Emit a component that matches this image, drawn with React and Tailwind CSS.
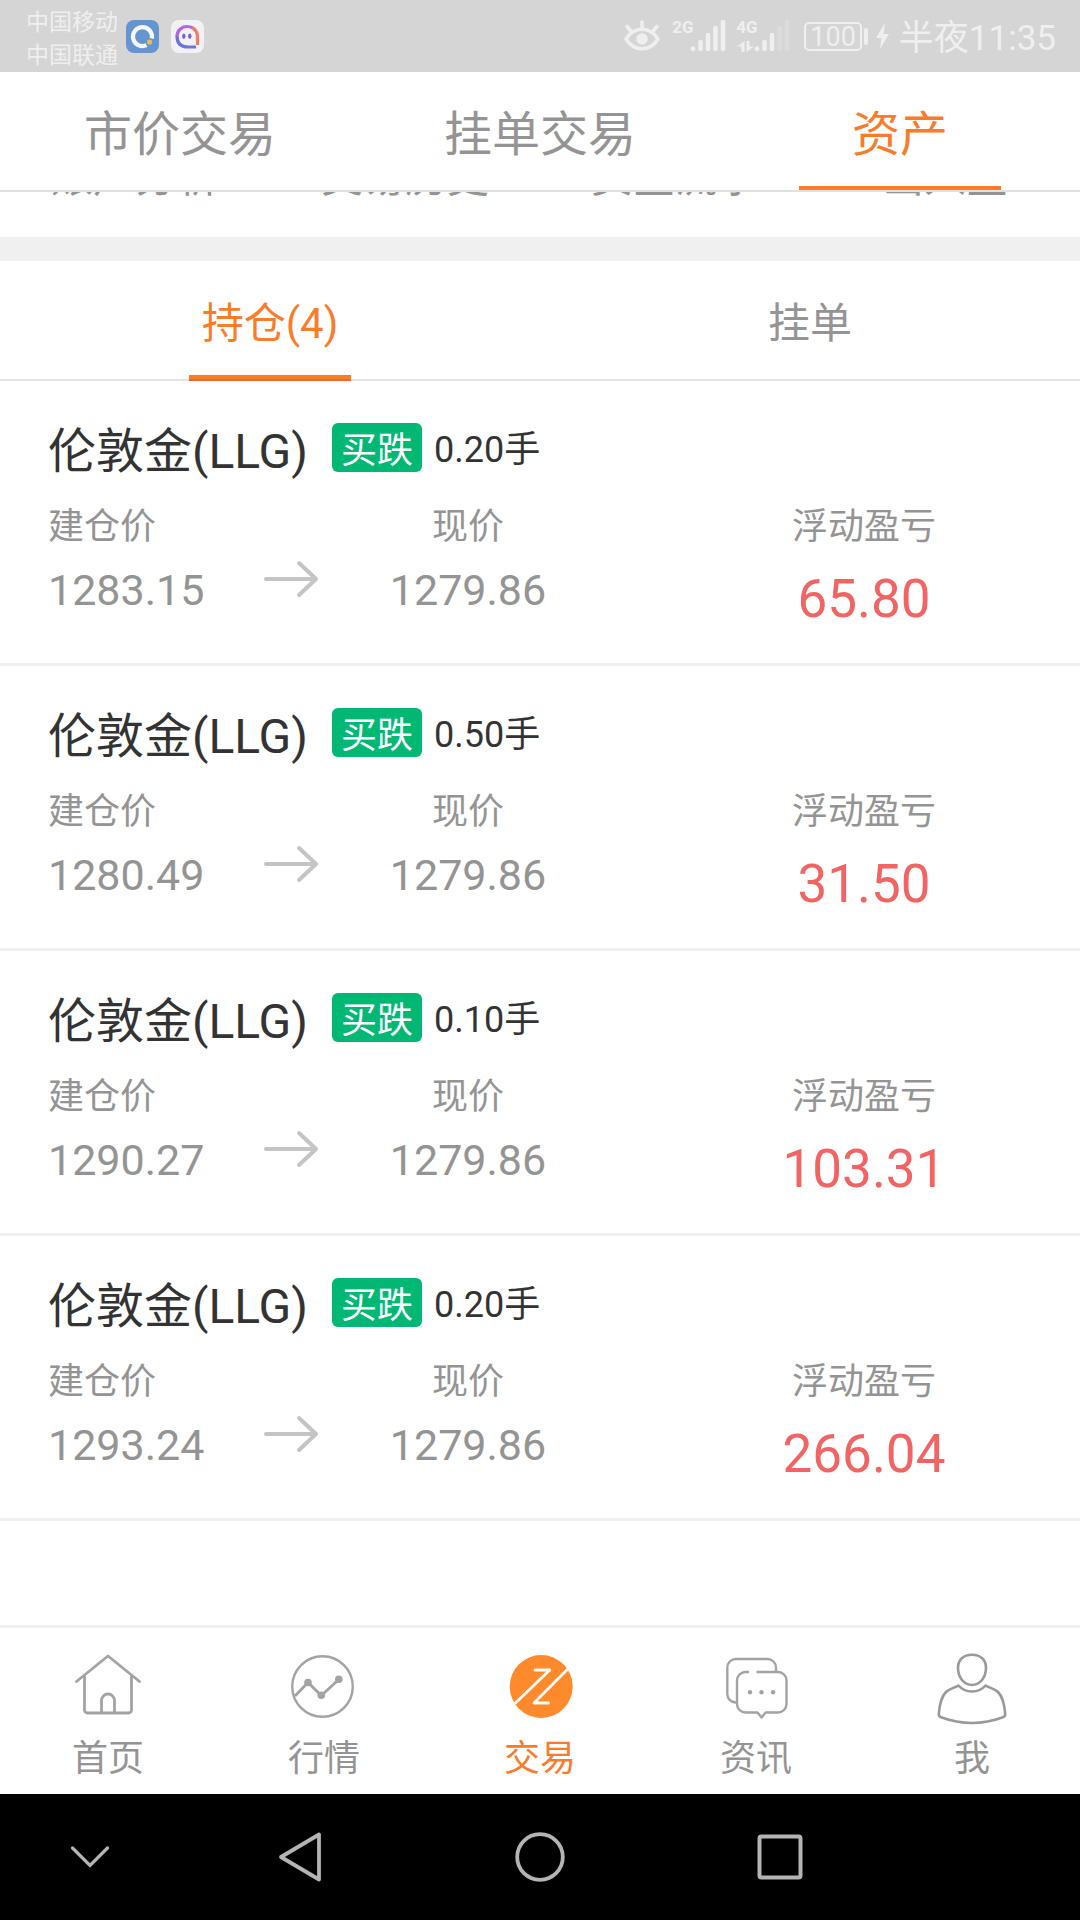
import React, { useState } from 'react';

const positions = [
    { id: 1, name: '伦敦金(LLG)', side: '买跌', lots: '0.20手', open: '1283.15', current: '1279.86', profit: '65.80' },
    { id: 2, name: '伦敦金(LLG)', side: '买跌', lots: '0.50手', open: '1280.49', current: '1279.86', profit: '31.50' },
    { id: 3, name: '伦敦金(LLG)', side: '买跌', lots: '0.10手', open: '1290.27', current: '1279.86', profit: '103.31' },
    { id: 4, name: '伦敦金(LLG)', side: '买跌', lots: '0.20手', open: '1293.24', current: '1279.86', profit: '266.04' },
];

const HomeIcon = () => (
    <svg className="w-[72px] h-[76px]" viewBox="0 0 72 76" fill="none" stroke="#a3a3a3" strokeWidth="2.8" strokeLinecap="round" strokeLinejoin="round">
        <path d="M4.5 32.5L36 7l31.500 25.500" />
        <path d="M12.500 28v33a3 3 0 0 0 3 3h41a3 3 0 0 0 3-3V28" />
        <path d="M29.500 63V51.500a6.500 6.500 0 0 1 13 0V63" />
    </svg>
);

const MarketIcon = () => (
    <svg className="w-[72px] h-[76px]" viewBox="0 0 72 76" fill="none" stroke="#a3a3a3" strokeWidth="2.4">
        <circle cx="34.500" cy="37.500" r="30.300" />
        <path d="M7 47l13-13.500 13.300 13L50.800 30.500" strokeWidth="2.8" />
        <g fill="#a3a3a3" stroke="none">
            <circle cx="20" cy="33.500" r="3.800" />
            <circle cx="33.300" cy="46.300" r="3.800" />
            <circle cx="50.800" cy="30.300" r="3.800" />
        </g>
    </svg>
);

const TradeIcon = () => (
    <svg className="w-[72px] h-[76px]" viewBox="0 0 72 76" fill="none">
        <circle cx="37.200" cy="37.500" r="31.500" fill="#ff8a2b" />
        <g stroke="#fff" strokeWidth="2.8" strokeLinecap="round" strokeLinejoin="round">
            <path d="M31 21h14.800L11.500 54" />
            <path d="M63.800 20L30 54h14.600" />
        </g>
    </svg>
);

const NewsIcon = () => (
    <svg className="w-[72px] h-[76px]" viewBox="0 0 72 76" fill="none" stroke="#a3a3a3" strokeWidth="2.4" strokeLinejoin="round">
        <path d="M17 53.500h-1.500A8.500 8.500 0 0 1 7.300 45V18.500A8.500 8.500 0 0 1 15.800 10H47.500a8.500 8.500 0 0 1 8.500 8.500V23" />
        <path d="M29 23h-3.500a8.500 8.500 0 0 0-8.500 8.500V55a8.500 8.500 0 0 0 8.500 8.500h12l4.100 5 4.100-5h12.300a8.500 8.500 0 0 0 8.500-8.500V31.500a8.500 8.500 0 0 0-8.500-8.500H36.500" />
        <g fill="#a3a3a3" stroke="none">
            <circle cx="30" cy="43.300" r="2.200" />
            <circle cx="41.500" cy="43.300" r="2.200" />
            <circle cx="53" cy="43.300" r="2.200" />
        </g>
    </svg>
);

const MeIcon = () => (
    <svg className="w-[72px] h-[76px]" viewBox="0 0 72 76" fill="none" stroke="#999" strokeWidth="2.6" strokeLinejoin="round">
        <path d="M36 5.800c8.500 0 14 5 14 13 0 9-5.500 17.200-14 17.200s-14-8.200-14-17.200c0-8 5.500-13 14-13z" />
        <path d="M22.400 36.500c-4 2.500-9 3-12.400 6.500C5.500 47.500 3.500 57 2.800 64.500c-.2 2 .2 3 2.200 3.700 20 7.400 42 7.400 62 0 2-.7 2.400-1.700 2.200-3.700C68.500 57 66.500 47.500 62 43c-3.400-3.500-8.400-4-12.400-6.500C42.500 44.500 29.500 44.500 22.400 36.500z" />
    </svg>
);

const navItems = [
    { label: '首页', icon: HomeIcon },
    { label: '行情', icon: MarketIcon },
    { label: '交易', icon: TradeIcon },
    { label: '资讯', icon: NewsIcon },
    { label: '我', icon: MeIcon },
];

const SignalBars = ({ level }) => (
    <svg className="w-9 h-[34px]" viewBox="0 0 36 34" stroke="#efefef" strokeWidth="4.600" strokeLinecap="round">
        <path d="M3 29.500v.5" />
        <path d="M10.500 23v7" />
        <path d="M18 16v14" />
        <path d="M25.500 9v21" opacity={level > 3 ? 1 : 0.300} />
        <path d="M33 3v27" opacity={level > 3 ? 1 : 0.300} />
    </svg>
);

const StatusBar = () => (
    <header className="h-[72px] shrink-0 bg-[#d5d5d5] text-[#efefef] flex items-center justify-between pl-[26px] pr-6">
        <div className="flex items-center">
            <div className="pt-[6px] text-[23px] leading-[33px]">
                <div>中国移动</div>
                <div>中国联通</div>
            </div>
            <svg className="w-[33px] h-[33px] ml-2" viewBox="0 0 33 33" fill="none">
                <rect width="33" height="33" rx="8" fill="#6595d1" />
                <path d="M20.500 25.200A9.500 9.500 0 1 1 25.800 18.500" stroke="#f5f7fa" strokeWidth="4.200" />
                <circle cx="23.500" cy="22" r="2.600" fill="#e3bf55" />
            </svg>
            <svg className="w-[33px] h-[33px] ml-3" viewBox="0 0 33 33" fill="none" strokeWidth="3.200">
                <rect width="33" height="33" rx="8" fill="#f2f2f4" />
                <path d="M6 16.500A10 10 0 0 1 16.500 6.500q3 0 5 1.300" stroke="#b266e0" />
                <path d="M21 7.500q5.500 3 5.500 9V25" stroke="#ee7b6c" />
                <path d="M6 16q0 11 11 11h8" stroke="#6b74dc" />
                <ellipse cx="12.800" cy="16.300" rx="1.700" ry="2.700" fill="#7a62d8" />
                <ellipse cx="18.800" cy="16.300" rx="1.700" ry="2.700" fill="#7a62d8" />
            </svg>
        </div>

        <div className="flex items-center">
            <svg className="w-9 h-8 mr-3" viewBox="0 0 36 32" fill="none" stroke="#efefef" strokeWidth="3.600" strokeLinecap="round" strokeLinejoin="round">
                <path d="M2 19C10 6 26 6 34 19 26 32 10 32 2 19z" />
                <path d="M3 6.500l3.500 4M18 2v6M33 6.500l-3.500 4" />
                <circle cx="18" cy="19" r="5.800" fill="#efefef" stroke="none" />
            </svg>
            <div className="flex items-start mr-[10px]">
                <span className="w-[18px] text-[17px] leading-[16px] font-bold">2G</span>
                <SignalBars level={5} />
            </div>
            <div className="flex items-start mr-[14px]">
                <div className="w-[18px]">
                    <div className="text-[17px] leading-[16px] font-bold">4G</div>
                    <svg className="w-[18px] h-[18px]" viewBox="0 0 18 18" fill="#efefef">
                        <path d="M8.500 6v11h-3v-5.500H1zM10.500 17V6h3v5.500H18z" />
                    </svg>
                </div>
                <SignalBars level={3} />
            </div>
            <div className="flex items-center mr-2">
                <div className="h-[29px] px-1 rounded-[5px] border-2 border-[#efefef] text-[27px] leading-[26px]">100</div>
                <div className="w-1 h-[17px] ml-[2px] rounded-sm bg-[#efefef]" />
            </div>
            <svg className="w-[13px] h-[26px] mr-[10px]" viewBox="0 0 13 26" fill="#efefef">
                <path d="M9 0L0 15h5.500L4 26l9-15H7.500z" />
            </svg>
            <span className="pt-[5px] text-[35px] leading-[40px]">半夜11:35</span>
        </div>
    </header>
);

const PositionItem = ({ item }) => (
    <li className="h-[285px] pt-[38px] border-b-[3px] border-[#f0f0f0]">
        <div className="flex items-center pl-12 h-14">
            <h2 className="pt-[10px] text-[48px] leading-[56px] text-[#333]">{item.name}</h2>
            <span className="ml-6 px-[9px] pt-2 rounded-md bg-[#00b874] text-white text-[36px] leading-[41px]">{item.side}</span>
            <span className="ml-3 pt-[6px] text-[36px] leading-[49px] text-[#333]">{item.lots}</span>
        </div>
        <dl className="grid grid-cols-[7fr_2fr_8fr_13fr] pt-7 text-[#949494]">
            <div className="pl-12">
                <dt className="text-[36px] leading-[48px]">建仓价</dt>
                <dd className="pt-[14px] text-[43px] leading-[50px]">{item.open}</dd>
            </div>
            <div className="flex justify-center pt-14 pl-[6px]">
                <svg className="w-14 h-10" viewBox="0 0 56 40" fill="none" stroke="#c4c4c4" strokeWidth="4" strokeLinecap="round" strokeLinejoin="round">
                    <path d="M3 20h50M36 4l17 16-17 16" />
                </svg>
            </div>
            <div className="text-center">
                <dt className="text-[36px] leading-[48px]">现价</dt>
                <dd className="pt-[14px] text-[43px] leading-[50px]">{item.current}</dd>
            </div>
            <div className="text-center pl-9">
                <dt className="text-[36px] leading-[48px]">浮动盈亏</dt>
                <dd className="pt-[18px] text-[53px] leading-[60px] text-[#f06464]">{item.profit}</dd>
            </div>
        </dl>
    </li>
);

export default function App() {
    const [page, setPage] = useState('资产');
    const [tab, setTab] = useState('持仓');
    const [nav, setNav] = useState('交易');

    return (
        <div className="min-h-screen flex flex-col bg-white text-[#949494] font-['Roboto','Noto_Sans_CJK_SC',sans-serif]">
            <StatusBar />

            {/* Page tabs */}
            <nav className="grid grid-cols-3 h-[120px] border-b-2 border-[#e0e0e0]">
                {['市价交易', '挂单交易', '资产'].map((label) => (
                    <button
                        key={label}
                        onClick={() => setPage(label)}
                        className={`flex flex-col items-center justify-between text-[48px] ${page === label ? 'text-[#f87c2b]' : ''}`}
                    >
                        <span className="pt-7 leading-[70px]">{label}</span>
                        <span className={`w-[56%] h-1 ${page === label ? 'bg-[#fa7c2a]' : ''}`} />
                    </button>
                ))}
            </nav>

            {/* Shortcut row, scrolled under the tabs */}
            <div className="h-[45px] overflow-hidden flex flex-col justify-end">
                <div className="grid grid-cols-4 pb-[38px] text-center text-[42px] leading-[42px]">
                    <a href="#">账户分析</a>
                    <a href="#">交易历史</a>
                    <a href="#">资金流水</a>
                    <a href="#">出入金</a>
                </div>
            </div>
            <div className="h-6 bg-[#f0f0f0]" />

            {/* Positions / pending orders */}
            <div className="grid grid-cols-2 h-[120px] border-b-2 border-[#e3e3e3]">
                {[['持仓', '持仓(4)'], ['挂单', '挂单']].map(([key, label]) => (
                    <button
                        key={key}
                        onClick={() => setTab(key)}
                        className={`flex flex-col items-center justify-between text-[42px] ${tab === key ? 'text-[#f87c2b]' : ''}`}
                    >
                        <span className="pt-[33px] leading-[60px]">{label}</span>
                        <span className={`w-[30%] h-[6px] -mb-[2px] ${tab === key ? 'bg-[#fa7c2a] border-b-2 border-[#dd6f2b]' : ''}`} />
                    </button>
                ))}
            </div>

            <ul className="flex-1">
                {positions.map((item) => (
                    <PositionItem key={item.id} item={item} />
                ))}
            </ul>

            {/* App navigation */}
            <nav className="grid grid-cols-5 h-[169px] border-t-[3px] border-[#f0f0f0]">
                {navItems.map((item) => (
                    <button
                        key={item.label}
                        onClick={() => setNav(item.label)}
                        className={`flex flex-col items-center justify-start pt-[21px] text-[36px] leading-[48px] ${nav === item.label ? 'text-[#f87c2b]' : ''}`}
                    >
                        <item.icon />
                        <span className="pt-[10px]">{item.label}</span>
                    </button>
                ))}
            </nav>

            {/* System keys */}
            <footer className="grid grid-cols-[3fr_4fr_4fr_4fr_3fr] h-[126px] bg-black">
                <button aria-label="收起" className="flex items-center justify-center">
                    <svg className="w-[52px] h-[52px]" viewBox="0 0 52 52" fill="none" stroke="#b4b4b4" strokeWidth="3.200" strokeLinecap="round">
                        <path d="M8.500 17L26 34.500 43.500 17" />
                    </svg>
                </button>
                <button aria-label="返回" className="flex items-center justify-center">
                    <svg className="w-[52px] h-[52px]" viewBox="0 0 52 52" fill="none" stroke="#b4b4b4" strokeWidth="3.800" strokeLinejoin="round">
                        <path d="M45 3.500v45L7 26z" />
                    </svg>
                </button>
                <button aria-label="主页" className="flex items-center justify-center">
                    <svg className="w-[52px] h-[52px]" viewBox="0 0 52 52" fill="none" stroke="#b4b4b4" strokeWidth="3.800">
                        <circle cx="26" cy="26" r="22.800" />
                    </svg>
                </button>
                <button aria-label="最近" className="flex items-center justify-center">
                    <svg className="w-[52px] h-[52px]" viewBox="0 0 52 52" fill="none" stroke="#b4b4b4" strokeWidth="4">
                        <rect x="5.500" y="5.500" width="41" height="41" rx="2" />
                    </svg>
                </button>
            </footer>
        </div>
    );
}
